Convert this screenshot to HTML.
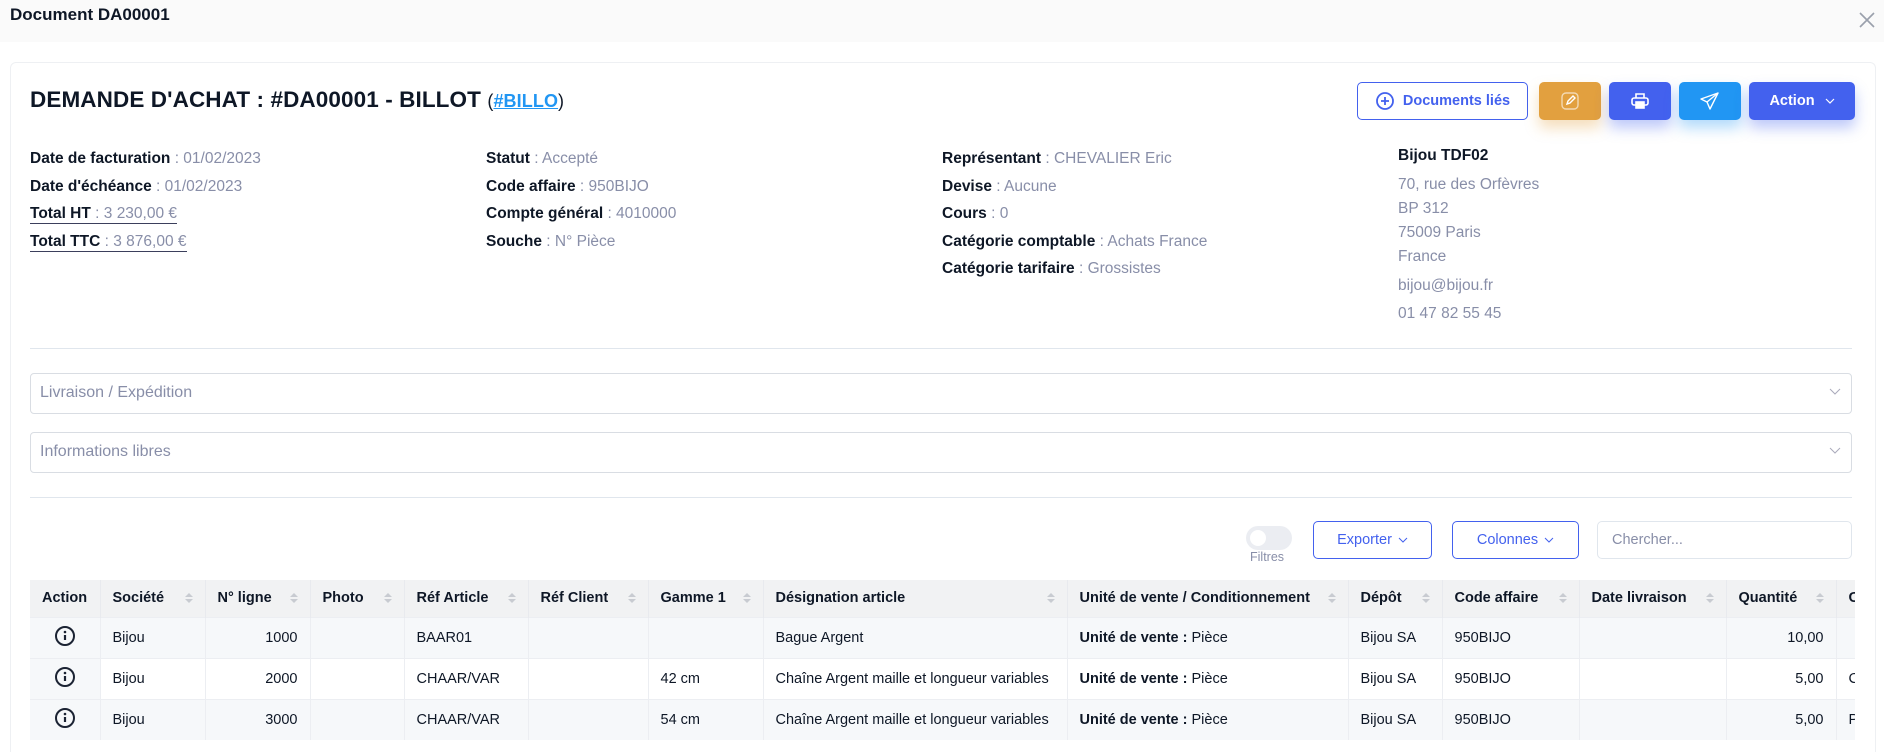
<!DOCTYPE html>
<html style="overflow:hidden;height:752px"><head><meta charset="utf-8"><style>
*{box-sizing:border-box;margin:0;padding:0}
body{width:1884px;height:752px;overflow:hidden;background:#fff;font-family:"Liberation Sans",Arial,sans-serif;color:#0e1726;position:relative}
.top{position:absolute;left:0;top:0;width:1884px;height:42px;background:#fafafa}
.top h1{position:absolute;left:10px;top:5px;font-size:17px;font-weight:bold;color:#0e1726}
.close{position:absolute;left:1856px;top:9px}
.card{position:absolute;left:10px;top:62px;width:1866px;height:690px;border:1px solid #eef0f3;border-bottom:0;border-radius:6px 6px 0 0;background:#fff}
.abs{position:absolute}
.h2{left:30px;top:87px;font-size:22.5px;font-weight:bold;letter-spacing:0.1px}
.h2 a{font-size:18px;color:#2196f3;text-decoration:underline;font-weight:600}
.btn{position:absolute;top:82px;height:38px;border-radius:5px;display:flex;align-items:center;justify-content:center;color:#fff;font-weight:bold;font-size:14.5px}
.col{position:absolute;top:145px;font-size:15.5px;line-height:27.6px}
.col b{font-weight:600;color:#0e1726}
.col span{color:#888ea8}
.u{border-bottom:1px solid #3b3f5c;padding-bottom:1px}
.addr{position:absolute;left:1398px;top:145px;font-size:15.5px;color:#888ea8}
.hr{position:absolute;left:30px;width:1822px;height:1px;background:#e0e6ed}
.acc{position:absolute;left:30px;width:1822px;height:41px;border:1px solid #d9dde3;border-radius:4px;font-size:16px;color:#888ea8;padding:10px 0 0 9px}
.chev{position:absolute;right:10px;top:14px}
.tb{position:absolute;top:521px;height:38px;border:1px solid #4361ee;border-radius:5px;color:#4361ee;font-size:14.5px;font-weight:500;display:flex;align-items:center;justify-content:center;gap:6px}
table{position:absolute;left:30px;top:580px;border-collapse:collapse;table-layout:fixed;font-size:14.5px;width:1906px}
.clip{position:absolute;left:0;top:0;width:1855px;height:752px;overflow:hidden}
th{height:37px;background:#f1f2f3;text-align:left;font-weight:bold;padding:0 12px;border-right:1px solid #e8eaee;white-space:nowrap;position:relative}
th.s::after{content:"";position:absolute;right:12px;top:13px;width:0;height:0;border-left:4px solid transparent;border-right:4px solid transparent;border-bottom:4px solid #c8cbd1}
th.s::before{content:"";position:absolute;right:12px;top:19px;width:0;height:0;border-left:4px solid transparent;border-right:4px solid transparent;border-top:4px solid #c8cbd1}
td{height:41px;padding:0 12px;border-right:1px solid #eceef2;border-top:1px solid #eceef2;white-space:nowrap;overflow:hidden}
tr.z td{background:#f6f8fa}
td.a{background:#f6f8fa;text-align:center;padding:0}
td.r{text-align:right}
</style></head><body>
<div class="top"><h1>Document DA00001</h1>
<svg class="close" width="22" height="22" viewBox="0 0 22 22"><path d="M4 4L18 18M18 4L4 18" stroke="#9aa0ac" stroke-width="1.6"/></svg></div>
<div class="card"></div>
<div class="abs h2">DEMANDE D'ACHAT : #DA00001 - BILLOT <span style="font-size:18px;font-weight:normal">(<a style="font-weight:bold">#BILLO</a>)</span></div>

<div class="btn" style="left:1357px;width:171px;border:1px solid #4361ee;background:#fff;color:#4361ee;gap:8px">
<svg width="20" height="20" viewBox="0 0 20 20"><circle cx="10" cy="10" r="8" fill="none" stroke="#4361ee" stroke-width="1.8"/><path d="M10 6v8M6 10h8" stroke="#4361ee" stroke-width="1.8"/></svg>Documents liés</div>
<div class="btn" style="left:1539px;width:62px;background:#e2a03f;box-shadow:0 8px 14px rgba(226,160,63,.35)">
<svg width="20" height="20" viewBox="0 0 20 20" fill="none" stroke="#fff" stroke-width="1.4"><rect x="2" y="2" width="16" height="16" rx="4" stroke-opacity=".6"/><path d="M7 13l1-3 5-5 2 2-5 5z"/></svg></div>
<div class="btn" style="left:1609px;width:62px;background:#4361ee;box-shadow:0 8px 14px rgba(67,97,238,.35)">
<svg width="20" height="20" viewBox="0 0 20 20" fill="none" stroke="#fff" stroke-width="1.6"><path d="M6 7V3h8v4"/><rect x="2" y="7" width="16" height="7" rx="2"/><rect x="6" y="11" width="8" height="6" fill="#fff"/></svg></div>
<div class="btn" style="left:1679px;width:62px;background:#2196f3;box-shadow:0 8px 14px rgba(33,150,243,.35)">
<svg width="22" height="22" viewBox="0 0 22 22" fill="none" stroke="#fff" stroke-width="1.4" stroke-linejoin="round"><path d="M19 3L2 9l6 3 3 7z"/><path d="M8 12l11-9"/></svg></div>
<div class="btn" style="left:1749px;width:106px;background:#4361ee;box-shadow:0 8px 14px rgba(67,97,238,.35);gap:10px">Action <svg width="10" height="6" viewBox="0 0 10 6"><path d="M1 1l4 4 4-4" stroke="#fff" fill="none" stroke-width="1.2"/></svg></div>

<div class="col" style="left:30px"><b>Date de facturation</b><span> : 01/02/2023</span><br><b>Date d'échéance</b><span> : 01/02/2023</span><br><span class="u"><b>Total HT</b><span> : 3 230,00 €</span></span><br><span class="u"><b>Total TTC</b><span> : 3 876,00 €</span></span></div>
<div class="col" style="left:486px"><b>Statut</b><span> : Accepté</span><br><b>Code affaire</b><span> : 950BIJO</span><br><b>Compte général</b><span> : 4010000</span><br><b>Souche</b><span> : N° Pièce</span></div>
<div class="col" style="left:942px"><b>Représentant</b><span> : CHEVALIER Eric</span><br><b>Devise</b><span> : Aucune</span><br><b>Cours</b><span> : 0</span><br><b>Catégorie comptable</b><span> : Achats France</span><br><b>Catégorie tarifaire</b><span> : Grossistes</span></div>
<div class="addr">
<div style="position:absolute;top:0;line-height:22px;color:#0e1726;font-weight:600;white-space:nowrap">Bijou TDF02</div>
<div style="position:absolute;top:28px;line-height:24px;white-space:nowrap">70, rue des Orfèvres<br>BP 312<br>75009 Paris<br>France</div>
<div style="position:absolute;top:130px;line-height:22px;white-space:nowrap">bijou@bijou.fr</div>
<div style="position:absolute;top:158px;line-height:22px;white-space:nowrap">01 47 82 55 45</div>
</div>

<div class="hr" style="top:348px"></div>
<div class="acc" style="top:373px">Livraison / Expédition<svg class="chev" width="12" height="8" viewBox="0 0 12 8"><path d="M1 1l5 5 5-5" stroke="#aab" fill="none"/></svg></div>
<div class="acc" style="top:432px">Informations libres<svg class="chev" width="12" height="8" viewBox="0 0 12 8"><path d="M1 1l5 5 5-5" stroke="#aab" fill="none"/></svg></div>
<div class="hr" style="top:497px"></div>

<div class="abs" style="left:1246px;top:526px;width:46px;height:24px;border-radius:12px;background:#ebedf2"><div style="position:absolute;left:4px;top:4px;width:16px;height:16px;border-radius:8px;background:#fff"></div></div>
<div class="abs" style="left:1250px;top:550px;font-size:12.5px;color:#888ea8">Filtres</div>
<div class="tb" style="left:1313px;width:119px">Exporter <svg width="10" height="6" viewBox="0 0 10 6"><path d="M1 1l4 4 4-4" stroke="#4361ee" fill="none"/></svg></div>
<div class="tb" style="left:1452px;width:127px">Colonnes <svg width="10" height="6" viewBox="0 0 10 6"><path d="M1 1l4 4 4-4" stroke="#4361ee" fill="none"/></svg></div>
<div class="tb" style="left:1597px;width:255px;border-color:#e0e6ed;color:#888ea8;font-weight:normal;justify-content:flex-start;padding-left:14px">Chercher...</div>

<div class="clip"><table>
<colgroup><col style="width:70px"><col style="width:105px"><col style="width:105px"><col style="width:94px"><col style="width:124px"><col style="width:120px"><col style="width:115px"><col style="width:304px"><col style="width:281px"><col style="width:94px"><col style="width:137px"><col style="width:147px"><col style="width:110px"><col style="width:100px"></colgroup>
<tr><th>Action</th><th class="s">Société</th><th class="s">N° ligne</th><th class="s">Photo</th><th class="s">Réf Article</th><th class="s">Réf Client</th><th class="s">Gamme 1</th><th class="s">Désignation article</th><th class="s">Unité de vente / Conditionnement</th><th class="s">Dépôt</th><th class="s">Code affaire</th><th class="s">Date livraison</th><th class="s">Quantité</th><th>Conditionnement</th></tr>
<tr class="z"><td class="a"><svg width="22" height="22" viewBox="0 0 22 22"><circle cx="11" cy="11" r="9" fill="none" stroke="#1b2333" stroke-width="2"/><path d="M11 10v5" stroke="#1b2333" stroke-width="2.2"/><circle cx="11" cy="7" r="1.3" fill="#1b2333"/></svg></td><td>Bijou</td><td class="r">1000</td><td></td><td>BAAR01</td><td></td><td></td><td>Bague Argent</td><td><b>Unité de vente :</b> Pièce</td><td>Bijou SA</td><td>950BIJO</td><td></td><td class="r">10,00</td><td></td></tr>
<tr><td class="a"><svg width="22" height="22" viewBox="0 0 22 22"><circle cx="11" cy="11" r="9" fill="none" stroke="#1b2333" stroke-width="2"/><path d="M11 10v5" stroke="#1b2333" stroke-width="2.2"/><circle cx="11" cy="7" r="1.3" fill="#1b2333"/></svg></td><td>Bijou</td><td class="r">2000</td><td></td><td>CHAAR/VAR</td><td></td><td>42 cm</td><td>Chaîne Argent maille et longueur variables</td><td><b>Unité de vente :</b> Pièce</td><td>Bijou SA</td><td>950BIJO</td><td></td><td class="r">5,00</td><td>Chaîne</td></tr>
<tr class="z"><td class="a"><svg width="22" height="22" viewBox="0 0 22 22"><circle cx="11" cy="11" r="9" fill="none" stroke="#1b2333" stroke-width="2"/><path d="M11 10v5" stroke="#1b2333" stroke-width="2.2"/><circle cx="11" cy="7" r="1.3" fill="#1b2333"/></svg></td><td>Bijou</td><td class="r">3000</td><td></td><td>CHAAR/VAR</td><td></td><td>54 cm</td><td>Chaîne Argent maille et longueur variables</td><td><b>Unité de vente :</b> Pièce</td><td>Bijou SA</td><td>950BIJO</td><td></td><td class="r">5,00</td><td>Pièce</td></tr>
</table></div>
</body></html>
